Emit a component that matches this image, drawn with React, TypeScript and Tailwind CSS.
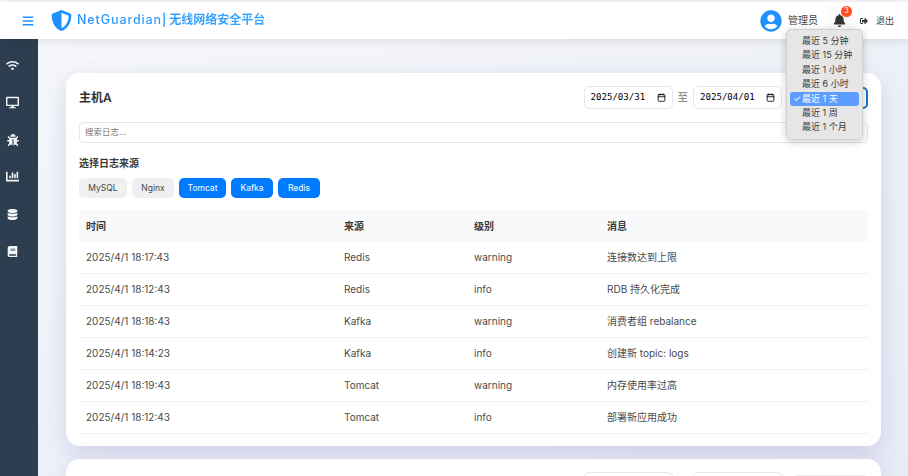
import React from 'react';
import { FaBars, FaBell, FaBook, FaBug, FaChartBar, FaDatabase, FaDesktop, FaShieldAlt, FaSignOutAlt, FaUserCircle, FaWifi } from 'react-icons/fa';
import { Calendar } from 'lucide-react';

const logs = [
  { time: '2025/4/1 18:17:43', source: 'Redis', level: 'warning', message: '连接数达到上限' },
  { time: '2025/4/1 18:12:43', source: 'Redis', level: 'info', message: 'RDB 持久化完成' },
  { time: '2025/4/1 18:18:43', source: 'Kafka', level: 'warning', message: '消费者组 rebalance' },
  { time: '2025/4/1 18:14:23', source: 'Kafka', level: 'info', message: '创建新 topic: logs' },
  { time: '2025/4/1 18:19:43', source: 'Tomcat', level: 'warning', message: '内存使用率过高' },
  { time: '2025/4/1 18:12:43', source: 'Tomcat', level: 'info', message: '部署新应用成功' },
];

const ranges = ['最近 5 分钟', '最近 15 分钟', '最近 1 小时', '最近 6 小时', '最近 1 天', '最近 1 周', '最近 1 个月'];

const sideIcons = [
  <FaWifi size={13} />,
  <FaDesktop size={13} />,
  <FaBug size={12} />,
  <FaChartBar size={13} />,
  <FaDatabase size={11} />,
  <FaBook size={11} />,
];

function DateBox({ value }: { value?: string }) {
  return (
    <div className="flex h-[23px] w-[89px] items-center justify-between rounded-[5px] border border-[#e4e6ea] bg-white pl-[6px] pr-[6px] font-['DejaVu_Sans_Mono',monospace] text-[9.1px] text-black">
      <span>{value}</span>
      {value && <Calendar size={9} strokeWidth={2.2} />}
    </div>
  );
}

export default function App() {
  return (
    <div className="flex h-screen flex-col overflow-hidden bg-[#f5f7fa] font-['Inter','Noto_Sans_CJK_SC',sans-serif]">
      {/* top bar */}
      <header className="relative z-20 mt-[2px] flex h-[37px] shrink-0 items-center bg-white pl-[22px] pr-[14px] shadow-[0_2px_10px_rgba(0,0,0,0.1)]">
        <FaBars className="text-[#1e90ff]" size={12} />
        <FaShieldAlt className="ml-[17px] text-[#1e90ff]" size={21} />
        <span className="ml-[5px] bg-gradient-to-r from-[#1e90ff] to-[#3aa8ff] bg-clip-text text-[12px] font-semibold text-transparent">
          <span className="text-[12.5px] font-medium tracking-[0.9px]">NetGuardian</span>| 无线网络安全平台
        </span>
        <div className="ml-auto flex items-center">
          <FaUserCircle className="text-[#1e90ff]" size={22} />
          <span className="ml-[6px] text-[10px] text-[#444]">管理员</span>
          <div className="relative ml-[15px]">
            <span className="absolute -bottom-[6px] -left-[6px] -right-[7px] -top-[8px] bg-[#fbfbfc]" />
            <FaBell className="relative text-[#333]" size={13} />
            <span className="absolute -right-[6px] -top-[8px] flex h-[11px] w-[11px] items-center justify-center rounded-full bg-[#ff4d1c] text-[7px] text-white">3</span>
          </div>
          <FaSignOutAlt className="ml-[14px] text-[#333]" size={8} />
          <span className="ml-[8px] text-[9px] text-[#444]">退出</span>
        </div>
      </header>

      <div className="flex min-h-0 flex-1">
        {/* sidebar */}
        <aside className="flex w-[38px] shrink-0 flex-col gap-[24.3px] bg-[#2c3e50] pl-[6px] pt-[19.5px] text-[#f3f5f7]">
          {sideIcons.map((icon, i) => (
            <div key={i} className="flex h-[13px] w-[13px] items-center justify-center">{icon}</div>
          ))}
        </aside>

        <main className="min-w-0 flex-1 overflow-hidden bg-gradient-to-br from-[#f5f7fa] to-[#e9ebf6] pl-[28px] pr-[27px] pt-[34px]">
          <section className="rounded-[14px] bg-white px-[13px] pb-[12px] pt-[12px] shadow-[0_8px_24px_rgba(80,80,170,0.18)]">
            <div className="flex h-[25px] items-center">
              <h2 className="text-[12px] font-semibold text-[#333]">主机A</h2>
              <div className="ml-auto flex items-center gap-[5px]">
                <DateBox value="2025/03/31" />
                <span className="text-[10.5px] text-[#777]">至</span>
                <DateBox value="2025/04/01" />
                <div className="ml-[6px] h-[22px] w-[75px] rounded-[5px] border-2 border-[#1a6fd0] bg-white" />
              </div>
            </div>
            <div className="mt-[12px] flex h-[21px] items-center rounded-[5px] border border-[#e4e6ea] px-[5px] text-[8.5px] text-[#777]">搜索日志...</div>
            <h3 className="mt-[13px] text-[10px] font-semibold leading-[14px] text-[#3a3a3a]">选择日志来源</h3>
            <div className="mt-[8px] flex gap-[5px] text-[8.5px]">
              <button className="h-[20px] w-[48px] rounded-[5px] bg-[#f0f0f0] text-[#444]">MySQL</button>
              <button className="h-[20px] w-[42px] rounded-[5px] bg-[#f0f0f0] text-[#444]">Nginx</button>
              <button className="h-[20px] w-[47px] rounded-[5px] bg-[#007bff] text-white">Tomcat</button>
              <button className="h-[20px] w-[42px] rounded-[5px] bg-[#007bff] text-white">Kafka</button>
              <button className="h-[20px] w-[42px] rounded-[5px] bg-[#007bff] text-white">Redis</button>
            </div>
            <table className="mt-[12px] w-full table-fixed border-separate border-spacing-0 text-left text-[10px] text-[#4a4a4a]">
              <colgroup>
                <col className="w-[258px]" />
                <col className="w-[130px]" />
                <col className="w-[133px]" />
                <col />
              </colgroup>
              <thead>
                <tr className="h-[32px] bg-[#f8f9fa] text-[#3a3a3a]">
                  <th className="pl-[7px] font-semibold">时间</th>
                  <th className="pl-[7px] font-semibold">来源</th>
                  <th className="pl-[7px] font-semibold">级别</th>
                  <th className="pl-[7px] font-semibold">消息</th>
                </tr>
              </thead>
              <tbody>
                {logs.map((log, i) => (
                  <tr key={i} className="h-[32px]">
                    <td className="border-b border-[#f0f0f0] pl-[7px]">{log.time}</td>
                    <td className="border-b border-[#f0f0f0] pl-[7px]">{log.source}</td>
                    <td className="border-b border-[#f0f0f0] pl-[7px]">{log.level}</td>
                    <td className="border-b border-[#f0f0f0] pl-[7px]">{log.message}</td>
                  </tr>
                ))}
              </tbody>
            </table>
          </section>

          <section className="mt-[13px] rounded-[14px] bg-white px-[13px] pt-[13px] shadow-[0_8px_24px_rgba(80,80,170,0.18)]">
            <div className="flex items-center justify-end gap-[20px]">
              <DateBox />
              <div className="flex items-center gap-[11px]">
                <DateBox />
                <div className="mt-[2px] h-[20px] w-[75px] rounded-[5px] bg-[#f0f0f0]" />
              </div>
            </div>
          </section>
        </main>
      </div>

      {/* open select menu */}
      <div className="absolute left-[786px] top-[29px] z-30 w-[77px] rounded-[5px] border border-[#d0d0d0] bg-[#e6e6e6] px-[3px] py-[4px] text-[9px] leading-[14.4px] text-[#3a3a3a] shadow-[0_2px_8px_rgba(0,0,0,0.2)]">
        {ranges.map((r) => (
          <div key={r} className={r === '最近 1 天' ? 'relative rounded-[3px] bg-[#5c9dff] pl-[12px] text-white' : 'pl-[12px]'}>
            {r === '最近 1 天' && <span className="absolute left-[3px]">✓</span>}
            {r}
          </div>
        ))}
      </div>
    </div>
  );
}
